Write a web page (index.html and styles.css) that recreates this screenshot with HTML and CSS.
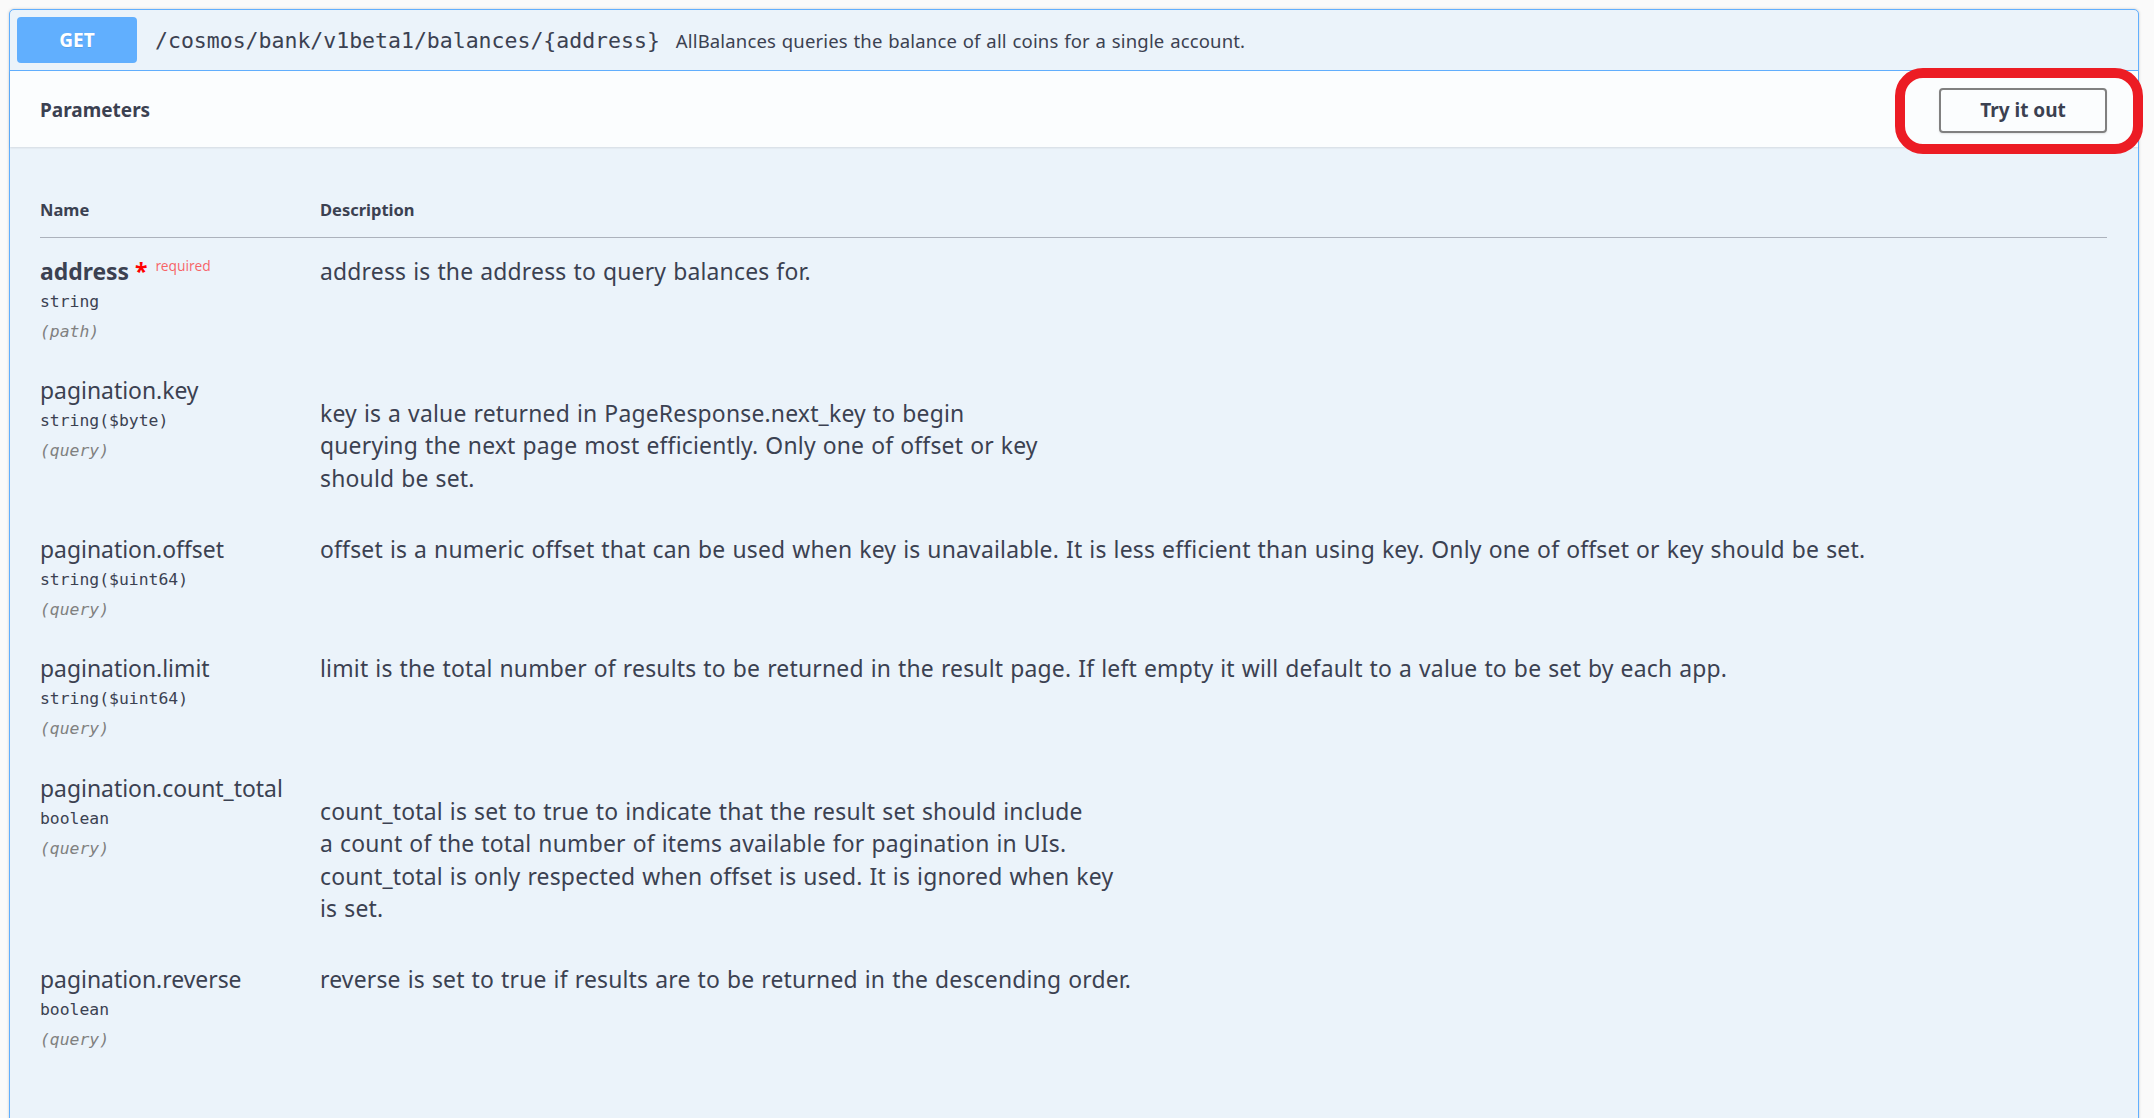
FILE: index.html
```html
<!DOCTYPE html>
<html lang="en">
<head>
<meta charset="utf-8">
<title>AllBalances</title>
<link rel="stylesheet" href="styles.css">
</head>
<body>
<div class="opblock">
  <div class="summary">
    <span class="method">GET</span>
    <span class="path">/cosmos/bank/v1beta1/balances/{address}</span>
    <span class="summary-desc">AllBalances queries the balance of all coins for a single account.</span>
  </div>
  <div class="section-header">
    <h4 class="title">Parameters</h4>
    <button class="try-out">Try it out</button>
  </div>
  <div class="table-container">
    <table class="parameters">
      <thead>
        <tr><th class="col-name">Name</th><th class="col-desc">Description</th></tr>
      </thead>
      <tbody>
        <tr>
          <td class="col-name">
            <div class="param-name">address<span class="star">&nbsp;*</span><span class="req">required</span></div>
            <div class="param-type">string</div>
            <div class="param-in">(path)</div>
          </td>
          <td class="col-desc"><p class="md">address is the address to query balances for.</p></td>
        </tr>
        <tr>
          <td class="col-name">
            <div class="param-name plain">pagination.key</div>
            <div class="param-type">string($byte)</div>
            <div class="param-in">(query)</div>
          </td>
          <td class="col-desc"><p class="md multi">key is a value returned in PageResponse.next_key to begin<br>querying the next page most efficiently. Only one of offset or key<br>should be set.</p></td>
        </tr>
        <tr>
          <td class="col-name">
            <div class="param-name plain">pagination.offset</div>
            <div class="param-type">string($uint64)</div>
            <div class="param-in">(query)</div>
          </td>
          <td class="col-desc"><p class="md">offset is a numeric offset that can be used when key is unavailable. It is less efficient than using key. Only one of offset or key should be set.</p></td>
        </tr>
        <tr>
          <td class="col-name">
            <div class="param-name plain">pagination.limit</div>
            <div class="param-type">string($uint64)</div>
            <div class="param-in">(query)</div>
          </td>
          <td class="col-desc"><p class="md">limit is the total number of results to be returned in the result page. If left empty it will default to a value to be set by each app.</p></td>
        </tr>
        <tr>
          <td class="col-name">
            <div class="param-name plain">pagination.count_total</div>
            <div class="param-type">boolean</div>
            <div class="param-in">(query)</div>
          </td>
          <td class="col-desc"><p class="md multi">count_total is set to true to indicate that the result set should include<br>a count of the total number of items available for pagination in UIs.<br>count_total is only respected when offset is used. It is ignored when key<br>is set.</p></td>
        </tr>
        <tr>
          <td class="col-name">
            <div class="param-name plain">pagination.reverse</div>
            <div class="param-type">boolean</div>
            <div class="param-in">(query)</div>
          </td>
          <td class="col-desc"><p class="md">reverse is set to true if results are to be returned in the descending order.</p></td>
        </tr>
      </tbody>
    </table>
  </div>
</div>
<div class="highlight"></div>
</body>
</html>
```

FILE: styles.css
```css
* { box-sizing: border-box; }

html, body {
  margin: 0;
  padding: 0;
}

body {
  position: relative;
  height: 1118px;
  overflow: hidden;
  background: #fafafa;
  color: #3b4151;
  font-family: "Noto Sans", "Open Sans", sans-serif;
}

.opblock {
  margin: 9px 15px 0 9px;
  border: 1px solid #61affe;
  border-radius: 5px;
  background: #ebf3fa;
  box-shadow: 0 0 3px rgba(0, 0, 0, 0.19);
}

.summary {
  display: flex;
  align-items: center;
  padding: 7px;
  border-bottom: 1px solid #61affe;
}

.method {
  display: flex;
  align-items: center;
  justify-content: center;
  width: 120px;
  height: 46px;
  border-radius: 4px;
  background: #61affe;
  color: #fff;
  font-size: 19px;
  font-weight: 700;
  text-shadow: 0 1px 0 rgba(0, 0, 0, 0.1);
}

.path {
  margin-left: 18px;
  font-family: "DejaVu Sans Mono", "Liberation Mono", monospace;
  font-size: 21.5px;
  color: #3b4151;
}

.summary-desc {
  margin-left: 16px;
  font-size: 18.5px;
  letter-spacing: 0.15px;
  word-spacing: 0.8px;
  color: #3b4151;
}

.section-header {
  display: flex;
  align-items: center;
  justify-content: space-between;
  height: 76px;
  padding: 2px 31px 0 30px;
  background: rgba(255, 255, 255, 0.8);
  box-shadow: 0 1px 2px rgba(0, 0, 0, 0.1);
}

.title {
  margin: 0;
  font-size: 19px;
  font-weight: 700;
}

.try-out {
  width: 168px;
  height: 45px;
  border: 2px solid #808080;
  border-radius: 4px;
  background: transparent;
  color: #3b4151;
  font-family: "Noto Sans", "Open Sans", sans-serif;
  font-size: 19px;
  font-weight: 700;
  box-shadow: 0 1px 2px rgba(0, 0, 0, 0.1);
}

.table-container {
  padding: 35px 31px 90px 30px;
}

.parameters {
  width: 100%;
  border-collapse: collapse;
  table-layout: fixed;
}

.parameters th {
  padding: 16.5px 0;
  border-bottom: 1px solid rgba(59, 65, 81, 0.2);
  text-align: left;
  font-size: 16.5px;
  line-height: 22px;
  font-weight: 700;
}

.parameters th.col-name {
  width: 280px;
}

.parameters td {
  vertical-align: top;
  padding: 18.5px 0 11px;
}

.param-name {
  height: 30px;
  font-size: 22.9px;
  line-height: 30px;
  font-weight: 700;
  white-space: nowrap;
}

.param-name.plain {
  font-weight: 400;
}

.star {
  color: red;
  line-height: 0;
}

.req {
  position: relative;
  top: -9px;
  padding-left: 8px;
  color: rgba(255, 0, 0, 0.6);
  font-size: 13.75px;
  font-weight: 400;
  line-height: 0;
}

.param-type {
  font-family: "DejaVu Sans Mono", "Liberation Mono", monospace;
  font-size: 16.4px;
  line-height: 30px;
}

.param-in {
  font-family: "DejaVu Sans Mono", "Liberation Mono", monospace;
  font-size: 16.4px;
  line-height: 30px;
  font-style: italic;
  color: #808080;
}

.md {
  margin: 0;
  font-size: 22.9px;
  line-height: 30px;
  letter-spacing: 0.2px;
  word-spacing: 0.8px;
}

.md.multi {
  margin: 22px 0 10px;
  line-height: 32.4px;
}

.highlight {
  position: absolute;
  left: 1895px;
  top: 68px;
  width: 248px;
  height: 86px;
  border: 10px solid #ec1c24;
  border-radius: 28px;
  pointer-events: none;
}
```
